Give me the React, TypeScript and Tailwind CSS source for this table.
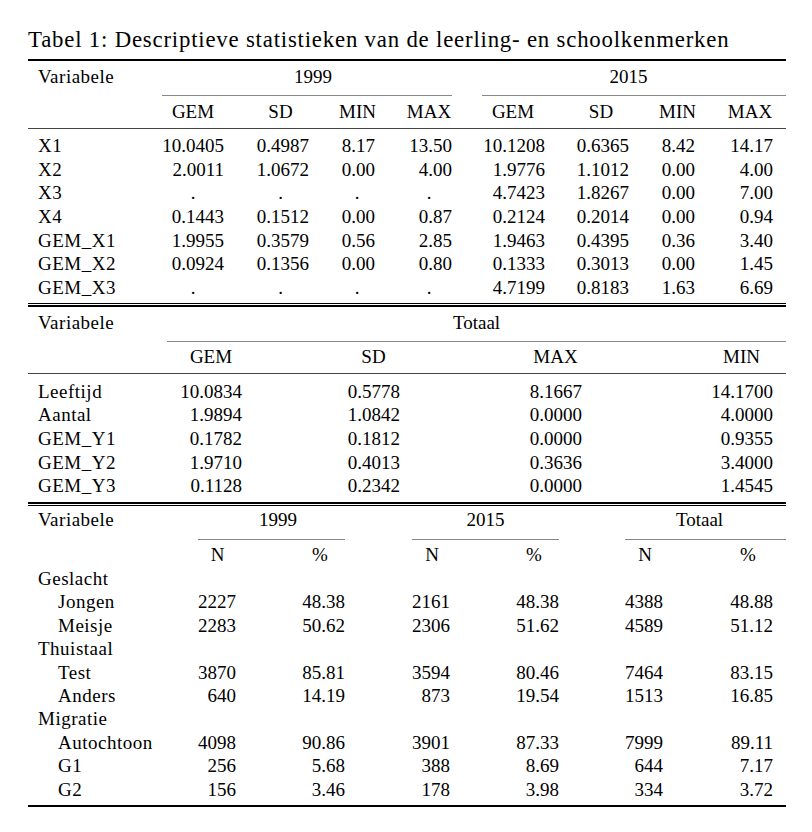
import React from "react";

const G1 = "grid grid-cols-[134px_62px_85px_66px_77px_30px_63px_84px_66px_78px_13px]";
const G2 = "grid grid-cols-[139px_75px_158px_182px_191px_13px]";
const G3 = "grid grid-cols-[170px_38px_109px_67px_38px_109px_66px_38px_110px_13px]";

function Lbl({ children, indent }: { children: React.ReactNode; indent?: boolean }) {
  return (
    <div className={indent ? "pl-[30px] tracking-[0.5px] whitespace-nowrap" : "pl-[10px] tracking-[0.5px] whitespace-nowrap"}>
      {children}
    </div>
  );
}

function Num({ v }: { v: string }) {
  return <div className="text-right whitespace-nowrap">{v}</div>;
}

function Ctr({ v, w }: { v: string; w: string }) {
  return (
    <div className="flex justify-end">
      <span className={w + " text-center whitespace-nowrap shrink-0"}>{v}</span>
    </div>
  );
}

const w1 = ["w-[62px]", "w-[57px]", "w-[36px]", "w-[46px]", "w-[64px]", "w-[56px]", "w-[36px]", "w-[46px]"];
const w2 = ["w-[62px]", "w-[53px]", "w-[53px]", "w-[63px]"];
const w3 = ["w-[37px]", "w-[50px]", "w-[36px]", "w-[50px]", "w-[36px]", "w-[50px]"];

const rows1 = [
  ["X1", "10.0405", "0.4987", "8.17", "13.50", "10.1208", "0.6365", "8.42", "14.17"],
  ["X2", "2.0011", "1.0672", "0.00", "4.00", "1.9776", "1.1012", "0.00", "4.00"],
  ["X3", ".", ".", ".", ".", "4.7423", "1.8267", "0.00", "7.00"],
  ["X4", "0.1443", "0.1512", "0.00", "0.87", "0.2124", "0.2014", "0.00", "0.94"],
  ["GEM_X1", "1.9955", "0.3579", "0.56", "2.85", "1.9463", "0.4395", "0.36", "3.40"],
  ["GEM_X2", "0.0924", "0.1356", "0.00", "0.80", "0.1333", "0.3013", "0.00", "1.45"],
  ["GEM_X3", ".", ".", ".", ".", "4.7199", "0.8183", "1.63", "6.69"],
];

const rows2 = [
  ["Leeftijd", "10.0834", "0.5778", "8.1667", "14.1700"],
  ["Aantal", "1.9894", "1.0842", "0.0000", "4.0000"],
  ["GEM_Y1", "0.1782", "0.1812", "0.0000", "0.9355"],
  ["GEM_Y2", "1.9710", "0.4013", "0.3636", "3.4000"],
  ["GEM_Y3", "0.1128", "0.2342", "0.0000", "1.4545"],
];

const rows3: (string[] | string)[] = [
  "Geslacht",
  ["Jongen", "2227", "48.38", "2161", "48.38", "4388", "48.88"],
  ["Meisje", "2283", "50.62", "2306", "51.62", "4589", "51.12"],
  "Thuistaal",
  ["Test", "3870", "85.81", "3594", "80.46", "7464", "83.15"],
  ["Anders", "640", "14.19", "873", "19.54", "1513", "16.85"],
  "Migratie",
  ["Autochtoon", "4098", "90.86", "3901", "87.33", "7999", "89.11"],
  ["G1", "256", "5.68", "388", "8.69", "644", "7.17"],
  ["G2", "156", "3.46", "178", "3.98", "334", "3.72"],
];

function Cell1({ v, i }: { v: string; i: number }) {
  return v === "." ? <Ctr v={v} w={w1[i]} /> : <Num v={v} />;
}

function DoubleRule() {
  return (
    <div>
      <div className="h-[1.5px] bg-black" />
      <div className="h-[1px]" />
      <div className="h-[1.5px] bg-black" />
    </div>
  );
}

export default function App() {
  return (
    <div className="w-[812px] h-[832px] bg-white pt-[28px] text-black text-[19px] leading-[24px] font-['Liberation_Serif',serif]">
      <div className="ml-[28px] w-[758px]">
        <div className="h-[24px] mb-[7px] text-[22.8px] leading-[24px] whitespace-nowrap tracking-[0.8px]">
          Tabel 1: Descriptieve statistieken van de leerling- en schoolkenmerken
        </div>
        <div className="h-[2px] bg-black" />

        {/* Block 1 */}
        <div className={G1 + " h-[35px] items-stretch"}>
          <div className="pt-[4px]">
            <Lbl>Variabele</Lbl>
          </div>
          <div className="col-span-4 pt-[4px] pl-[12px] text-center border-b border-[#888]">1999</div>
          <div />
          <div className="col-span-5 pt-[4px] pr-[11px] text-center border-b border-[#888]">2015</div>
        </div>
        <div className={G1 + " h-[32px] pt-[4px] items-start"}>
          <div />
          <Ctr v="GEM" w={w1[0]} />
          <Ctr v="SD" w={w1[1]} />
          <Ctr v="MIN" w={w1[2]} />
          <Ctr v="MAX" w={w1[3]} />
          <div />
          <Ctr v="GEM" w={w1[4]} />
          <Ctr v="SD" w={w1[5]} />
          <Ctr v="MIN" w={w1[6]} />
          <Ctr v="MAX" w={w1[7]} />
          <div />
        </div>
        <div className="h-px bg-[#444]" />
        <div className="pt-[5px] pb-[3px]">
          {rows1.map((r) => (
            <div key={r[0]} className={G1 + " h-[23.67px] items-center"}>
              <Lbl>{r[0]}</Lbl>
              <Cell1 v={r[1]} i={0} />
              <Cell1 v={r[2]} i={1} />
              <Cell1 v={r[3]} i={2} />
              <Cell1 v={r[4]} i={3} />
              <div />
              <Cell1 v={r[5]} i={4} />
              <Cell1 v={r[6]} i={5} />
              <Cell1 v={r[7]} i={6} />
              <Cell1 v={r[8]} i={7} />
              <div />
            </div>
          ))}
        </div>
        <DoubleRule />

        {/* Block 2 */}
        <div className={G2 + " h-[35px] items-stretch"}>
          <div className="pt-[4px]">
            <Lbl>Variabele</Lbl>
          </div>
          <div className="col-span-5 pt-[4px] text-center border-b border-[#888]">Totaal</div>
        </div>
        <div className={G2 + " h-[31px] pt-[3px] items-start"}>
          <div />
          <Ctr v="GEM" w={w2[0]} />
          <Ctr v="SD" w={w2[1]} />
          <Ctr v="MAX" w={w2[2]} />
          <Ctr v="MIN" w={w2[3]} />
          <div />
        </div>
        <div className="h-px bg-[#444]" />
        <div className="pt-[6px] pb-[4.5px]">
          {rows2.map((r) => (
            <div key={r[0]} className={G2 + " h-[23.67px] items-center"}>
              <Lbl>{r[0]}</Lbl>
              <Num v={r[1]} />
              <Num v={r[2]} />
              <Num v={r[3]} />
              <Num v={r[4]} />
              <div />
            </div>
          ))}
        </div>
        <DoubleRule />

        {/* Block 3 */}
        <div className={G3 + " h-[34px] items-stretch"}>
          <div className="pt-[2px]">
            <Lbl>Variabele</Lbl>
          </div>
          <div className="col-span-2 pt-[2px] pl-[13px] text-center border-b border-[#888]">1999</div>
          <div />
          <div className="col-span-2 pt-[2px] text-center border-b border-[#888]">2015</div>
          <div />
          <div className="col-span-3 pt-[2px] pr-[12px] text-center border-b border-[#888]">Totaal</div>
        </div>
        <div className="pt-[3px] pb-[4px]">
          <div className={G3 + " h-[23.44px] items-center"}>
            <div />
            <Ctr v="N" w={w3[0]} />
            <Ctr v="%" w={w3[1]} />
            <div />
            <Ctr v="N" w={w3[2]} />
            <Ctr v="%" w={w3[3]} />
            <div />
            <Ctr v="N" w={w3[4]} />
            <Ctr v="%" w={w3[5]} />
            <div />
          </div>
          {rows3.map((r) =>
            typeof r === "string" ? (
              <div key={r} className={G3 + " h-[23.44px] items-center"}>
                <div className="col-span-3">
                  <Lbl>{r}</Lbl>
                </div>
              </div>
            ) : (
              <div key={r[0]} className={G3 + " h-[23.44px] items-center"}>
                <Lbl indent>{r[0]}</Lbl>
                <Num v={r[1]} />
                <Num v={r[2]} />
                <div />
                <Num v={r[3]} />
                <Num v={r[4]} />
                <div />
                <Num v={r[5]} />
                <Num v={r[6]} />
                <div />
              </div>
            )
          )}
        </div>
        <div className="h-[2px] bg-black" />
      </div>
    </div>
  );
}
